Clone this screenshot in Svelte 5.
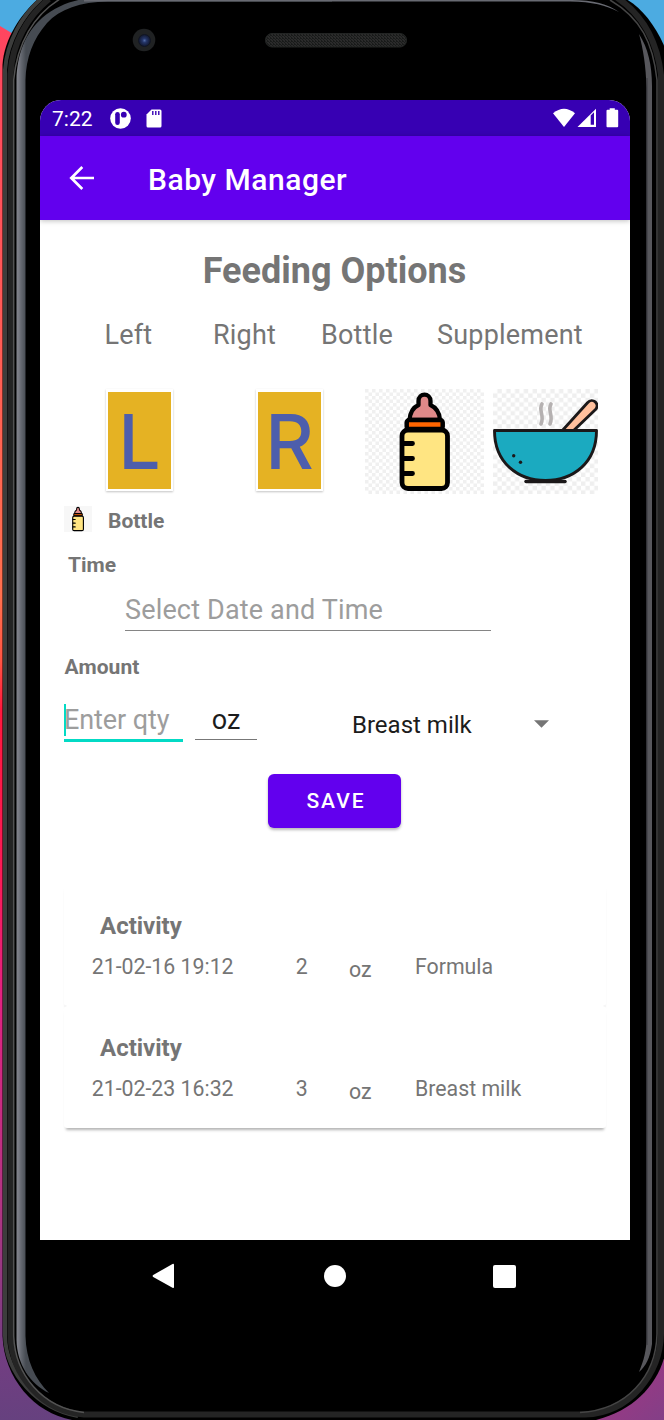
<script>
  const entries = [
    { time: '21-02-16 19:12', qty: '2', unit: 'oz', kind: 'Formula' },
    { time: '21-02-23 16:32', qty: '3', unit: 'oz', kind: 'Breast milk' }
  ];
</script>

{#snippet bottleArt()}
  <path d="M53.500 16 V12 C53.500 3.500 65.500 3.500 65.500 12 V16 C71 18.500 74.500 23 75 31 H44.500 C45 24 48 18.500 53.500 16 Z" fill="#df8989" stroke="#000" stroke-width="4.300" stroke-linejoin="round" />
  <rect x="41.700" y="31" width="36" height="9" rx="2.500" fill="#ff6500" stroke="#000" stroke-width="4.500" />
  <rect x="37" y="41" width="45.500" height="58.500" rx="6" fill="#ffe582" stroke="#000" stroke-width="4.800" />
  <path d="M38 54.500 H47.500 M38 69.500 H47.500 M38 84.500 H47.500" stroke="#000" stroke-width="4.800" stroke-linecap="round" />
{/snippet}

<div class="stage">
  <svg class="frame" width="664" height="1420" viewBox="0 0 664 1420" fill="none">
    <defs>
      <linearGradient id="wall" x1="0" y1="0" x2="0" y2="1420" gradientUnits="userSpaceOnUse">
        <stop offset="0" stop-color="#ff4360" /><stop offset=".3" stop-color="#ff6252" />
        <stop offset=".42" stop-color="#ff704e" /><stop offset=".465" stop-color="#ff5543" />
        <stop offset=".5" stop-color="#ff183d" /><stop offset=".62" stop-color="#fb1b57" />
        <stop offset=".7" stop-color="#e12280" /><stop offset=".85" stop-color="#b03582" />
        <stop offset=".95" stop-color="#743d82" /><stop offset="1" stop-color="#66417f" />
      </linearGradient>
      <linearGradient id="silver" x1="16" y1="0" x2="26" y2="0" gradientUnits="userSpaceOnUse">
        <stop offset="0" stop-color="#85878f" /><stop offset=".3" stop-color="#777982" /><stop offset=".5" stop-color="#656971" /><stop offset="1" stop-color="#464b52" />
      </linearGradient>
      <linearGradient id="corner" x1="600" y1="1350" x2="664" y2="1420" gradientUnits="userSpaceOnUse">
        <stop offset="0" stop-color="#a93481" /><stop offset="1" stop-color="#833f87" />
      </linearGradient>
      <pattern id="mesh" width="3" height="3" patternUnits="userSpaceOnUse"><rect width="3" height="3" fill="#191b1a" /><path d="M0 0H1V1H2V2H3V3" stroke="#333534" stroke-width=".8" /></pattern>
      <radialGradient id="lens"><stop offset="0" stop-color="#536ca5" /><stop offset=".35" stop-color="#243568" /><stop offset="1" stop-color="#11172c" /></radialGradient>
    </defs>
    <rect width="664" height="1420" fill="url(#wall)" />
    <path d="M0 0H664V100H20V38L0 26Z" fill="#4cabe1" />
    <path d="M580 1300H664V1420H580Z" fill="url(#corner)" />
    <path d="M38 -1 C22 13 4 38 2.500 65 V1336 C4 1378 34 1413 72 1420 H596 C636 1410 660 1382 666 1350 V50 C656 26 642 8 626 -1 Z" fill="#000" />
    <path d="M42 -2 C22 15 7 42 5 70 V1336 C6 1374 38 1409 78 1416" stroke="#3c3d3c" stroke-width="4" />
    <path d="M49 -1 C28 16 12 43 10.500 74 V1336 C12 1376 42 1411 84 1414.500 H585 C630 1413 660 1374 661 1334 V75 C657 40 642 14 616 -3" stroke="#242424" stroke-width="6" />
    <path d="M60 -1 C34 15 17 43 13.700 80 V1336 C15 1374 42 1408 84 1412.500" stroke="#525252" stroke-width="1.500" />
    <path d="M580 1412.500 C627 1410 656 1376 657 1334 V80 C653 43 641 18 610 0" stroke="#454545" stroke-width="1.500" />
    <path d="M332 -1 H84 C70 1 55 7 42 18 C25 33 17 55 16.500 80 V1340 C17 1364 30 1384 49 1393 C35 1379 26 1360 25.500 1336 V80 C26 58 33 39 47 23 C60 9 80 2 108 1.500 H332 Z" fill="url(#silver)" />
    <path d="M84 0 H572 C593 0 608 4 619 12 C605 5 593 2 570 1.500 H84 Z" fill="#686a72" />
    <path d="M639 34 C648 48 652 65 652 86 V1344 C650 1358 646 1366 639 1372 C644 1360 646.500 1350 646.500 1338 V88 C646 66 643 48 639 34Z" fill="#57575c" />
    <path d="M647 78V1345" stroke="#3b3b40" stroke-width="1" />
    <circle cx="144" cy="40" r="11.300" fill="#202223" />
    <circle cx="144.500" cy="40.500" r="6" fill="url(#lens)" stroke="#111522" />
    <rect x="265.500" y="33.500" width="141" height="13.500" rx="6.500" fill="url(#mesh)" stroke="#222423" />
  </svg>

  <main class="screen">
    <div class="status">
      <span class="clock">7:22</span>
      <svg class="badge" width="21" height="21" viewBox="0 0 21 21"><circle cx="10.500" cy="10.500" r="10.300" fill="#fff" /><rect x="5.200" y="4" width="4.600" height="13" rx="2.300" fill="#3700b3" /><circle cx="13.800" cy="6.700" r="2.900" fill="#3700b3" /></svg>
      <svg class="sd" width="16" height="19" viewBox="0 0 16 19"><path d="M5.500 .5H14Q15.500 .5 15.500 2V17Q15.500 18.500 14 18.500H2Q.5 18.500 .5 17V5.500Z" fill="#fff" /><path d="M6.800 2V6M9.800 2V6M12.800 2V6" stroke="#3700b3" stroke-width="1.400" /></svg>
      <svg class="signals" width="68" height="20" viewBox="0 0 68 20" fill="#fff"><path d="M1 5.200Q12 -3.800 23 5.200L12 19Z" /><path d="M25.500 19L44 .8V19Z" /><path d="M38.700 7.500L42 4.300V16.800H38.700Z" fill="#3700b3" /><path d="M57.700 .2H62.800V1.700H65.200Q66.200 1.700 66.200 2.700V18.300Q66.200 19.300 65.200 19.300H55.500Q54.500 19.300 54.500 18.300V2.700Q54.500 1.700 55.500 1.700H57.700Z" /></svg>
    </div>
    <header>
      <svg width="26" height="26" viewBox="0 0 26 26"><path d="M25 13H2.500M13.300 2L2.300 13L13.300 24" fill="none" stroke="#fff" stroke-width="2.700" /></svg>
      <span>Baby Manager</span>
    </header>

    <section class="body">
      <h1>Feeding Options</h1>
      <div class="labels"><span>Left</span><span>Right</span><span>Bottle</span><span>Supplement</span></div>
      <div class="tiles">
        <div class="letter">L</div>
        <div class="letter right">R</div>
        <svg width="119" height="105" viewBox="0 0 119 105">
          <defs><pattern id="fine" width="7" height="7" patternUnits="userSpaceOnUse"><path d="M0 0H3.500V7H7V3.500H0Z" fill="#f0f0f0" /></pattern></defs>
          <rect width="119" height="105" fill="#fff" /><rect width="119" height="105" fill="url(#fine)" />
          {@render bottleArt()}
        </svg>
        <svg class="bowl" width="105" height="105" viewBox="0 0 105 105">
          <defs><pattern id="coarse" width="8.800" height="8.800" patternUnits="userSpaceOnUse"><path d="M4.400 0H8.800V4.400H0V8.800H4.400Z" fill="#efefef" /></pattern></defs>
          <rect width="105" height="105" fill="#fff" /><rect width="105" height="105" fill="url(#coarse)" />
          <path d="M68 43L94.500 13.700C99.500 8 107.500 15 102.500 20.500L79 43Z" fill="#ffc09d" stroke="#1b1819" stroke-width="2.800" />
          <path d="M49 15C45 22 52 26 48 35M58 15C54 22 61 26 57 35" fill="none" stroke="#b5b1b1" stroke-width="3.600" stroke-linecap="round" />
          <path d="M1.500 41.500H103.500C103.500 74 80 91.500 52.500 91.500S1.500 74 1.500 41.500Z" fill="#1baac0" stroke="#1b1819" stroke-width="2.900" stroke-linejoin="round" />
          <path d="M33 92.500H72" stroke="#1b1819" stroke-width="3.500" stroke-linecap="round" />
          <circle cx="20.700" cy="66.700" r="1.700" fill="#1b1819" /><circle cx="27.500" cy="73.300" r="1.700" fill="#1b1819" />
        </svg>
      </div>

      <div class="picked">
        <svg width="28" height="26" viewBox="0 0 119 105" preserveAspectRatio="none"><rect width="119" height="105" fill="#f7f7f7" />{@render bottleArt()}</svg>
        <b>Bottle</b>
      </div>
      <b class="caption time">Time</b>
      <div class="date">Select Date and Time</div>
      <b class="caption amount">Amount</b>

      <div class="qtyrow">
        <div class="qty">Enter qty<i class="caret"></i></div>
        <div class="unit">oz</div>
        <div class="select"><span>Breast milk</span><svg width="15" height="8" viewBox="0 0 15 8"><path d="M0 .3H15L7.500 7.800Z" fill="#757575" /></svg></div>
      </div>
      <button>SAVE</button>

      <div class="cards">
        {#each entries as e}
          <article>
            <b>Activity</b>
            <div class="entry"><span>{e.time}</span><span>{e.qty}</span><span class="low">{e.unit}</span><span>{e.kind}</span></div>
          </article>
        {/each}
      </div>
    </section>
  </main>

  <nav>
    <svg width="23" height="26" viewBox="0 0 23 26"><path d="M1.200 12L20.500 1Q22 .3 22 2V24Q22 25.500 20.500 24.800L1.200 14Q0 13 1.200 12Z" fill="#fff" /></svg>
    <i class="home"></i>
    <i class="recent"></i>
  </nav>
</div>

<style>
  :global(body) { margin: 0; background: #000; }
  .stage { position: relative; width: 664px; height: 1420px; padding-top: 100px; box-sizing: border-box; overflow: hidden; font-family: Roboto, sans-serif; color: #757575; }
  .frame { position: absolute; inset: 0; display: block; }
  svg { display: block; flex: none; }
  .screen { position: relative; width: 590px; height: 1140px; margin: 0 0 0 40px; background: #fff; border-radius: 21px 21px 0 0; overflow: hidden; }
  .status { height: 36px; background: #3700b3; display: flex; align-items: center; box-sizing: border-box; padding-left: 12px; color: #fff; }
  .clock { font-size: 21px; line-height: 36px; width: 57.500px; padding-top: 1px; }
  .badge { margin-top: 1px; }
  .sd { margin-left: 15px; }
  .signals { margin: 0 10px 0 auto; }
  header { height: 84px; background: #6200ee; box-shadow: 0 1px 5px rgba(0,0,0,.25); display: flex; align-items: center; color: #fff; font-size: 30px; font-weight: 500; box-sizing: border-box; padding-left: 29px; position: relative; }
  header span { margin-left: 53px; padding-top: 4px; line-height: 40px; letter-spacing: .52px; }
  .body { padding: 0 24px; display: flex; flex-direction: column; }
  h1 { margin: 30px 0 0; font-size: 36px; line-height: 42px; font-weight: 700; text-align: center; }
  h1 { padding-right: 1px; }
  .labels { margin: 23px -24px 0; padding-left: 64.500px; display: grid; grid-template-columns: 108.500px 108px 116px auto; font-size: 27px; line-height: 40px; letter-spacing: .2px; }
  .tiles { display: flex; margin: 34px 0 0 42px; height: 105px; }
  .letter { width: 63px; height: 97px; background: #e5b223; border: 2px solid #fff; border-top-width: 3px; box-shadow: 0 1px 2px rgba(0,0,0,.24); color: #4d5eac; font: 500 75px/99px Inter, sans-serif; text-align: center; margin-right: 83px; }
  .letter.right { margin-right: 42px; }
  .bowl { margin-left: 9px; }
  .picked { display: flex; align-items: center; height: 26px; margin-top: 12px; font-size: 21px; }
  .picked b { margin-left: 16px; padding-top: 3px; }
  .caption { font-size: 21px; line-height: 26px; }
  .time { margin: 20px 0 0 4px; }
  .date { margin: 16px 0 0 61px; width: 366px; height: 36px; border-bottom: 1.500px solid #858585; color: #9d9d9d; font-size: 27px; line-height: 32px; letter-spacing: .16px; }
  .amount { margin: 23px 0 0 0.500px; letter-spacing: .1px; }
  .qtyrow { display: flex; margin-top: 22px; height: 42px; }
  .qty { position: relative; width: 119px; height: 37px; border-bottom: 3px solid #03dac5; font-size: 27px; line-height: 36px; color: #9d9d9d; letter-spacing: -.1px; }
  .caret { position: absolute; left: 0; top: 2px; width: 2px; height: 32px; background: #03dac5; }
  .unit { width: 62px; height: 37px; margin-left: 12px; border-bottom: 1.500px solid #777; text-align: center; font-size: 27px; line-height: 36px; color: #1c1c1c; }
  .select { display: flex; margin-left: 95px; font-size: 24px; line-height: 46px; color: #1c1c1c; }
  .select span { width: 182px; }
  .select svg { margin-top: 18px; }
  button { align-self: center; margin: 30px 1px 0 0; width: 133px; height: 54px; border: 0; border-radius: 6px; background: #6200ee; color: #fff; font: 500 21px/54px Roboto, sans-serif; letter-spacing: 2px; padding: 0 0 0 3px; box-shadow: 0 2px 3px rgba(0,0,0,.28); }
  .cards { margin-top: 56px; }
  article { height: 122px; box-sizing: border-box; padding: 27px 0 0 27px; border-radius: 3px; background: #fff; box-shadow: 0 4px 3px -2px rgba(0,0,0,.3); position: relative; }
  article b { display: block; margin-left: 9px; font-size: 24px; line-height: 30px; }
  .entry { margin-top: 12px; display: grid; grid-template-columns: 204px 54px 66px auto; font-size: 21.300px; line-height: 28px; }
  .entry span:nth-child(-n+2) { padding-left: .7px; }
  .low { padding-top: 3px; }
  nav { position: relative; margin: 0 0 0 40px; width: 590px; height: 72px; display: flex; align-items: center; }
  nav svg { margin-left: 112px; }
  .home { width: 22px; height: 22px; border-radius: 50%; background: #fff; margin-left: 149px; }
  .recent { width: 23px; height: 23px; border-radius: 2px; background: #fff; margin-left: 147px; }
</style>
